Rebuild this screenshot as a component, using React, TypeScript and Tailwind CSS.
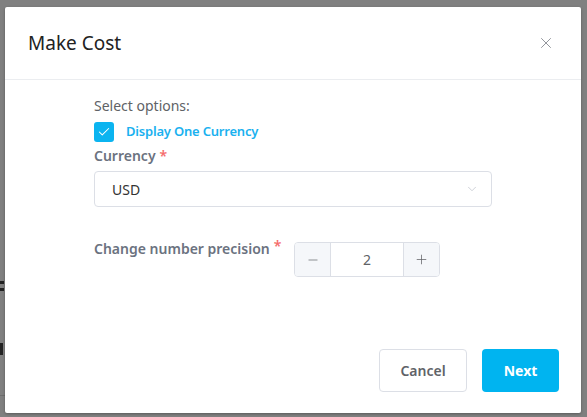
import { Check, ChevronDown, Minus, Plus, X } from 'lucide-react';

export default function App() {
  const font = { fontFamily: '"Noto Sans", "Open Sans", sans-serif' };

  return (
    <div className="w-[587px] h-[417px] bg-[#808080] overflow-hidden flex" style={font}>
      {/* bits of the page behind the overlay */}
      <div className="w-[5px] shrink-0 flex flex-col">
        <div className="h-[281px]" />
        <div className="h-[3px] w-[4px] bg-[#222]" />
        <div className="h-[4px]" />
        <div className="h-[3px] w-[4px] bg-[#222]" />
        <div className="h-[52px]" />
        <div className="h-[12px] w-[3px] bg-[#222]" />
        <div className="h-[40px]" />
        <div className="h-px w-full bg-[#6e6e6e]" />
      </div>

      <div className="mt-[7px] w-[576px] h-[406px] bg-white rounded-[2px] shadow-[0_1px_3px_rgba(0,0,0,0.3)] flex flex-col">
        {/* Header */}
        <div className="h-[73px] shrink-0 border-b border-[#ebedf0] flex items-center justify-between pl-[23px] pr-[26px]">
          <h2 className="text-[19px] text-[#222] leading-none">Make Cost</h2>
          <X className="w-[18px] h-[18px] text-[#909399]" strokeWidth={1.3} />
        </div>

        {/* Body */}
        <div className="flex-1 pl-[89px] pt-[16px] flex flex-col">
          <p className="text-[14px] text-[#606266] leading-[20px]">Select options:</p>
          <label className="mt-[6px] flex items-center gap-[12px] h-[20px]">
            <span className="w-[20px] h-[20px] rounded-[3px] bg-[#0bb4f0] flex items-center justify-center">
              <Check className="w-[14px] h-[14px] text-white" strokeWidth={1.8} />
            </span>
            <span className="text-[13px] font-semibold text-[#1ab1ef] tracking-[-0.2px]">Display One Currency</span>
          </label>
          <div className="mt-[1px] h-[24px] flex items-center text-[14px] font-semibold text-[#6b7280]">
            Currency <span className="ml-[4px] text-[#f56c6c]">*</span>
          </div>
          <div className="mt-[4px] w-[398px] h-[36px] border border-[#dcdfe6] rounded-[4px] flex items-center justify-between pl-[17px] pr-[12px]">
            <span className="text-[14px] text-[#333]">USD</span>
            <ChevronDown className="w-[14px] h-[14px] text-[#c0c4cc]" strokeWidth={1.3} />
          </div>

          <div className="mt-[35px] flex items-start">
            <div className="-mt-[4px] h-[20px] flex items-center text-[14px] font-semibold text-[#6b7280] w-[200px]">
              Change number precision <span className="ml-[4px] -mt-[6px] text-[#f56c6c]">*</span>
            </div>
            <div className="w-[146px] h-[35px] border border-[#dcdfe6] rounded-[4px] flex overflow-hidden">
              <div className="w-[36px] bg-[#f5f7fa] border-r border-[#dcdfe6] flex items-center justify-center">
                <Minus className="w-[14px] h-[14px] text-[#606266]" strokeWidth={1.2} />
              </div>
              <div className="flex-1 flex items-center justify-center text-[14px] text-[#606266]">2</div>
              <div className="w-[36px] bg-[#f5f7fa] border-l border-[#dcdfe6] flex items-center justify-center">
                <Plus className="w-[15px] h-[15px] text-[#606266]" strokeWidth={1.2} />
              </div>
            </div>
          </div>
        </div>

        {/* Footer */}
        <div className="h-[64px] shrink-0 flex items-start justify-end gap-[15px] pr-[22px]">
          <button className="w-[88px] h-[43px] border border-[#dcdfe6] rounded-[4px] bg-white text-[14px] font-semibold text-[#5f6368]">
            Cancel
          </button>
          <button className="w-[77px] h-[43px] rounded-[4px] bg-[#00b4f0] text-[14px] font-bold text-white">
            Next
          </button>
        </div>
      </div>
    </div>
  );
}
